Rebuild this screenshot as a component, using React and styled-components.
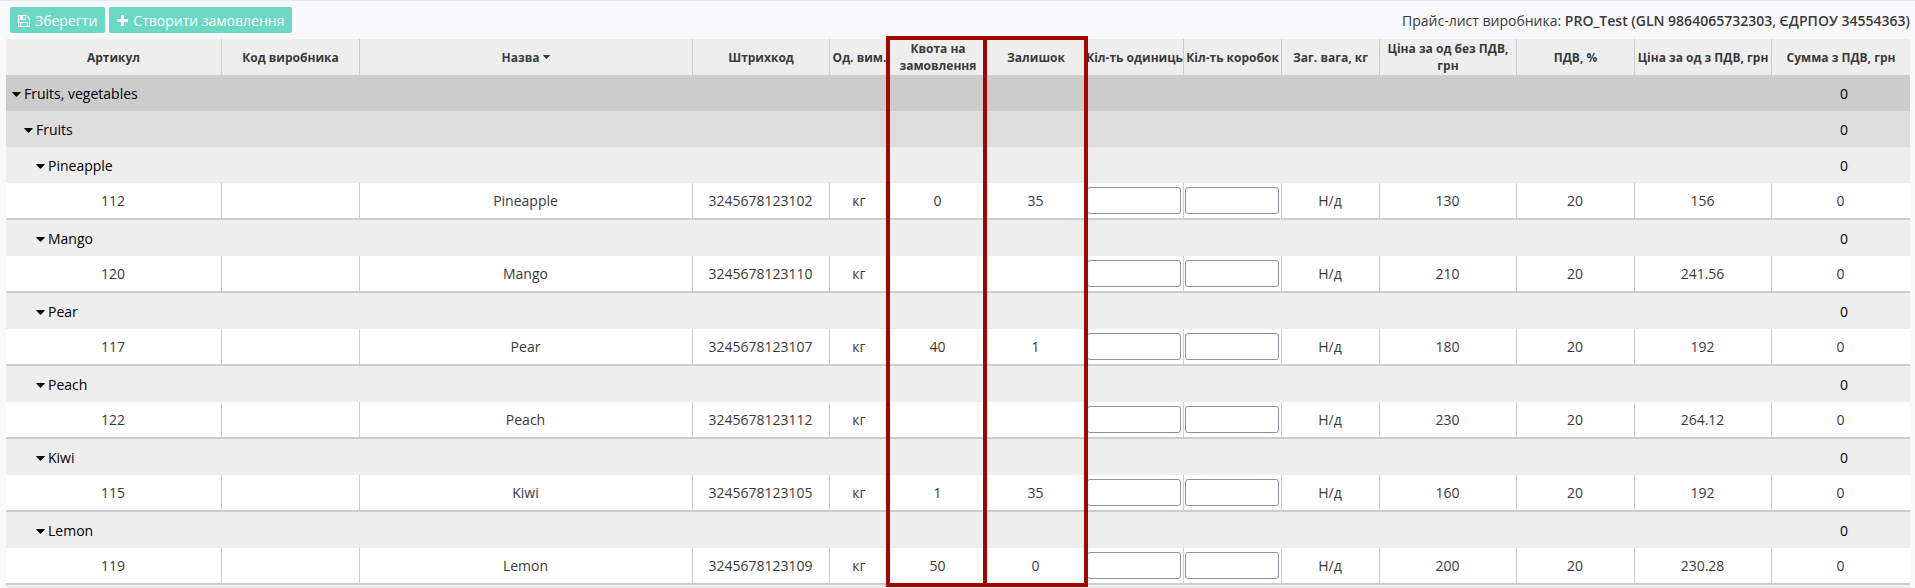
import React from "react";
import styled, { createGlobalStyle } from "styled-components";

const GlobalStyle = createGlobalStyle`
  body {
    margin: 0;
    background: #f9f9fb;
    color: #3a3a3a;
    font-family: "Open Sans", "Noto Sans", sans-serif;
    font-size: 14px;
    line-height: 20px;
  }
`;

const Page = styled.main`
  padding: 0 5px 0 6px;
  border-top: 1px solid #e7eaec;
`;

const Toolbar = styled.header`
  display: flex;
  justify-content: space-between;
  align-items: center;
  padding: 6px 0 6px 4px;
`;

const Actions = styled.div`
  display: flex;
  gap: 4px;
`;

const ActionButton = styled.button`
  display: flex;
  align-items: center;
  gap: 5px;
  height: 26px;
  padding: 1px 8px 0;
  border: 0;
  border-radius: 2px;
  background: #6bd8c4;
  color: #fff;
  font: inherit;
  white-space: nowrap;
  cursor: pointer;

  svg {
    flex: none;
  }
`;

const Supplier = styled.div`
  padding-top: 2px;

  b {
    font-weight: 600;
  }
`;

const TableArea = styled.div`
  position: relative;
  padding-bottom: 3px;
  background: #eee;
`;

const Table = styled.table`
  width: 100%;
  min-width: 1700px;
  table-layout: fixed;
  border-collapse: separate;
  border-spacing: 0;
`;

const Col = styled.col`
  width: ${(p) => (p.$width ? `${p.$width}px` : "auto")};
`;

const HeadCell = styled.th`
  height: 36px;
  padding: 0;
  border-right: 1px solid #ccc;
  background: #eee;
  font-size: 12px;
  line-height: 17px;
  font-weight: 700;

  &:last-child {
    border-right: 0;
  }
`;

const HeadLabel = styled.span`
  display: flex;
  justify-content: center;
  align-items: center;
  gap: 4px;
  white-space: ${(p) => (p.$wrap ? "normal" : "nowrap")};
`;

const levelColors = ["#ccc", "#ddd", "#eee"];

const GroupRow = styled.tr`
  height: 36px;
  background: ${(p) => levelColors[p.$level]};
  color: #000;
`;

const GroupName = styled.td`
  padding: 2px 0 0 ${(p) => 6 + p.$level * 12}px;
`;

const GroupToggle = styled.button`
  display: flex;
  align-items: center;
  gap: 3px;
  padding: 0;
  border: 0;
  background: none;
  color: inherit;
  font: inherit;
  cursor: pointer;
`;

const GroupSum = styled.td`
  padding: 2px 0 0 6px;
  text-align: center;
`;

const Cell = styled.td`
  height: 35px;
  padding: 0 2px 0 1px;
  border-right: 1px solid #ccc;
  border-bottom: 2px solid #ccc;
  background: #fff;
  text-align: center;

  &:last-child {
    border-right: 0;
  }
`;

const QuantityInput = styled.input`
  display: block;
  box-sizing: border-box;
  width: 100%;
  height: 27px;
  padding: 0 4px;
  border: 1px solid #8f8f9d;
  border-radius: 3px;
  background: #fff;
  font: inherit;
`;

const Highlight = styled.div`
  position: absolute;
  top: -3px;
  bottom: 1px;
  right: 822px;
  box-sizing: border-box;
  width: 202px;
  border: 4px solid #a30500;
  background: linear-gradient(#a30500, #a30500) 93px 0 / 4px 100% no-repeat;
  pointer-events: none;
`;

const Caret = ({ width = 9 }) => (
  <svg width={width} height={width === 9 ? 5 : 4} viewBox="0 0 9 5" aria-hidden="true">
    <path d="M0.4 0H8.6Q9 0.4 8.6 0.8L5 4.6Q4.5 5 4 4.6L0.4 0.8Q0 0.4 0.4 0Z" fill="currentColor" />
  </svg>
);

const SaveIcon = () => (
  <svg width="12" height="12" viewBox="0 0 1536 1536" aria-hidden="true">
    <path
      fill="currentColor"
      d="M384 1408h768v-384H384v384zm896 0h128V512q0-14-10-38.500t-20-34.500l-281-281q-10-10-34-20t-39-10v416q0 40-28 68t-68 28H352q-40 0-68-28t-28-68V128H128v1280h128V992q0-40 28-68t68-28h832q40 0 68 28t28 68v416zM896 480V160q0-13-9.500-22.500T864 128H672q-13 0-22.500 9.500T640 160v320q0 13 9.500 22.500T672 512h192q13 0 22.500-9.500T896 480zm640 32v928q0 40-28 68t-68 28H96q-40 0-68-28t-28-68V96q0-40 28-68T96 0h928q40 0 88 20t76 48l280 280q28 28 48 76t20 88z"
    />
  </svg>
);

const PlusIcon = () => (
  <svg width="11" height="11" viewBox="0 0 11 11" aria-hidden="true">
    <path d="M4 0.5Q4 0 4.500 0H6.500Q7 0 7 0.500V4H10.500Q11 4 11 4.500V6.500Q11 7 10.500 7H7V10.500Q7 11 6.500 11H4.500Q4 11 4 10.500V7H0.500Q0 7 0 6.500V4.500Q0 4 0.500 4H4Z" fill="currentColor" />
  </svg>
);

const columns = [
  { label: "Артикул", width: 216 },
  { label: "Код виробника", width: 138 },
  { label: "Назва", sorted: true },
  { label: "Штрихкод", width: 137 },
  { label: "Од. вим.", width: 60 },
  { label: "Квота на замовлення", width: 97, wrap: true },
  { label: "Залишок", width: 99 },
  { label: "Кіл-ть одиниць", width: 98 },
  { label: "Кіл-ть коробок", width: 98 },
  { label: "Заг. вага, кг", width: 98 },
  { label: "Ціна за од без ПДВ, грн", width: 137, wrap: true },
  { label: "ПДВ, %", width: 118 },
  { label: "Ціна за од з ПДВ, грн", width: 137 },
  { label: "Сумма з ПДВ, грн", width: 138 },
];

const products = [
  { code: "112", name: "Pineapple", barcode: "3245678123102", quota: "0", rest: "35", net: "130", gross: "156" },
  { code: "120", name: "Mango", barcode: "3245678123110", quota: "", rest: "", net: "210", gross: "241.56" },
  { code: "117", name: "Pear", barcode: "3245678123107", quota: "40", rest: "1", net: "180", gross: "192" },
  { code: "122", name: "Peach", barcode: "3245678123112", quota: "", rest: "", net: "230", gross: "264.12" },
  { code: "115", name: "Kiwi", barcode: "3245678123105", quota: "1", rest: "35", net: "160", gross: "192" },
  { code: "119", name: "Lemon", barcode: "3245678123109", quota: "50", rest: "0", net: "200", gross: "230.28" },
];

const Group = ({ level, name }) => (
  <GroupRow $level={level}>
    <GroupName $level={level} colSpan={13}>
      <GroupToggle type="button" aria-expanded="true">
        <Caret />
        {name}
      </GroupToggle>
    </GroupName>
    <GroupSum>0</GroupSum>
  </GroupRow>
);

const Product = ({ item }) => (
  <tr>
    <Cell>{item.code}</Cell>
    <Cell />
    <Cell>{item.name}</Cell>
    <Cell>{item.barcode}</Cell>
    <Cell>кг</Cell>
    <Cell>{item.quota}</Cell>
    <Cell>{item.rest}</Cell>
    <Cell>
      <QuantityInput type="text" aria-label={`Кіл-ть одиниць, ${item.name}`} />
    </Cell>
    <Cell>
      <QuantityInput type="text" aria-label={`Кіл-ть коробок, ${item.name}`} />
    </Cell>
    <Cell>Н/д</Cell>
    <Cell>{item.net}</Cell>
    <Cell>20</Cell>
    <Cell>{item.gross}</Cell>
    <Cell>0</Cell>
  </tr>
);

export default function App() {
  return (
    <Page>
      <GlobalStyle />
      <Toolbar>
        <Actions>
          <ActionButton type="button">
            <SaveIcon />
            Зберегти
          </ActionButton>
          <ActionButton type="button">
            <PlusIcon />
            Створити замовлення
          </ActionButton>
        </Actions>
        <Supplier>
          Прайс-лист виробника: <b>PRO_Test (GLN 9864065732303, ЄДРПОУ 34554363)</b>
        </Supplier>
      </Toolbar>
      <TableArea>
        <Table>
          <colgroup>
            {columns.map((c) => (
              <Col key={c.label} $width={c.width} />
            ))}
          </colgroup>
          <thead>
            <tr>
              {columns.map((c) => (
                <HeadCell key={c.label} scope="col" aria-sort={c.sorted ? "ascending" : undefined}>
                  <HeadLabel $wrap={c.wrap}>
                    {c.label}
                    {c.sorted && <Caret width={7} />}
                  </HeadLabel>
                </HeadCell>
              ))}
            </tr>
          </thead>
          <tbody>
            <Group level={0} name="Fruits, vegetables" />
            <Group level={1} name="Fruits" />
            {products.map((item) => (
              <React.Fragment key={item.code}>
                <Group level={2} name={item.name} />
                <Product item={item} />
              </React.Fragment>
            ))}
          </tbody>
        </Table>
        <Highlight />
      </TableArea>
    </Page>
  );
}
